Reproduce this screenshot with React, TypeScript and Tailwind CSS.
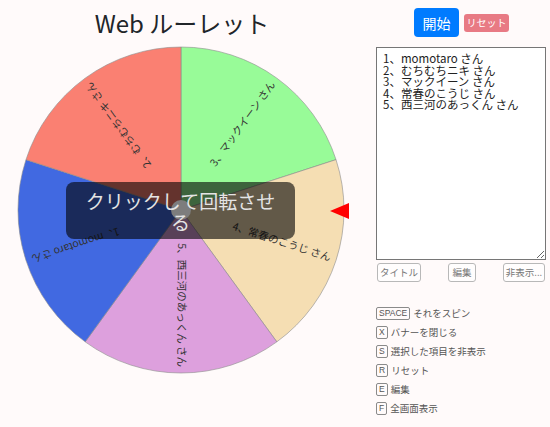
const slices = [
  { name: "3、マックイーン さん", color: "#98fb98", from: 0 },
  { name: "4、常春のこうじ さん", color: "#f5deb3", from: 72 },
  { name: "5、西三河のあっくん さん", color: "#dda0dd", from: 144 },
  { name: "1、momotaro さん", color: "#4169e1", from: 216 },
  { name: "2、むちむちニキ さん", color: "#fa8072", from: 288 },
];

const shortcuts = [
  { key: "SPACE", label: "それをスピン" },
  { key: "X", label: "バナーを閉じる" },
  { key: "S", label: "選択した項目を非表示" },
  { key: "R", label: "リセット" },
  { key: "E", label: "編集" },
  { key: "F", label: "全画面表示" },
];

const CX = 181;
const CY = 166;
const R = 163;

const pt = (deg: number, r: number) => {
  const a = (deg * Math.PI) / 180;
  return [CX + r * Math.sin(a), CY - r * Math.cos(a)];
};

const Wheel = () => (
  <svg width={364} height={334} className="block">
    {slices.map(s => {
      const [x1, y1] = pt(s.from, R);
      const [x2, y2] = pt(s.from + 72, R);
      return (
        <path
          key={s.name}
          d={`M${CX} ${CY} L${x1} ${y1} A${R} ${R} 0 0 1 ${x2} ${y2} Z`}
          fill={s.color}
          stroke="#8c8c8c"
          strokeWidth={0.6}
        />
      );
    })}
    {slices.map(s => (
      <text
        key={s.name + "-t"}
        transform={`translate(${CX} ${CY}) rotate(${s.from + 36 - 90})`}
        x={157}
        y={0}
        textAnchor="end"
        dominantBaseline="middle"
        fontSize={10.5}
        fill="#333"
        style={{ fontFamily: '"Noto Sans CJK JP", sans-serif' }}
      >
        {s.name}
      </text>
    ))}
    <polygon points="330,167 349,159 349,175" fill="#ff0000" />
  </svg>
);

export default function App() {
  return (
    <div
      className="flex w-[550px] h-[427px] bg-[#fffafa] text-[#212529] overflow-hidden"
      style={{ fontFamily: '"Noto Sans CJK JP", sans-serif' }}
    >
      <div className="w-[364px] shrink-0">
        <h1 className="h-[44px] flex items-center justify-center text-[24px] leading-none pt-[2px]">
          Web ルーレット
        </h1>
        <div className="relative">
          <Wheel />
          <div className="absolute left-[66px] top-[138px] w-[229px] h-[57px] rounded-[8px] bg-black/60" />
          <div className="absolute left-[171px] top-[156px] w-[20px] h-[20px] rounded-full bg-[#7d7d7d] z-[1]" />
          <div className="absolute left-[66px] top-[138px] w-[229px] h-[57px] px-[13px] flex items-center justify-center text-center text-[19px] leading-[21px] text-[#e4e4e4] z-[2] cursor-pointer">
            クリックして回転させる
          </div>
        </div>
      </div>

      <div className="ml-[12px] w-[170px] shrink-0">
        <div className="flex justify-center items-center gap-[5px] pt-[8px] pl-[1px]">
          <button className="w-[45px] h-[29px] rounded-[4px] bg-[#007bff] text-white text-[14px] leading-none">
            開始
          </button>
          <button className="w-[45px] h-[18px] rounded-[3px] bg-[#e87a84] text-white text-[10px] leading-none">
            リセット
          </button>
        </div>

        <textarea
          className="block mt-[10px] w-[170px] h-[213px] border border-[#767676] bg-white px-[6px] py-[5px] text-[11.5px] leading-[11.5px] text-[#222] overflow-y-scroll outline-none"
          defaultValue={"1、momotaro さん\n2、むちむちニキ さん\n3、マックイーン さん\n4、常春のこうじ さん\n5、西三河のあっくん さん"}
        />

        <div className="flex justify-between mt-[3px] px-[1px]">
          {["タイトル", "編集", "非表示..."].map(b => (
            <button
              key={b}
              className={`h-[19px] ${b === "編集" ? "w-[28px]" : b === "タイトル" ? "w-[44px]" : "w-[42px]"} rounded-[3px] border border-[#b8b8b8] bg-white/50 text-[9.5px] leading-none text-[#777]`}
            >
              {b}
            </button>
          ))}
        </div>

        <ul className="mt-[22px] flex flex-col">
          {shortcuts.map(s => (
            <li key={s.key} className="h-[19px] flex items-center gap-[3px]">
              <span
                className="h-[13px] px-[2px] flex items-center border border-[#8a8a8a] rounded-[2px] text-[8.5px] leading-none text-[#555]"
                style={{ fontFamily: '"Liberation Sans", sans-serif' }}
              >
                {s.key}
              </span>
              <span className="text-[9.5px] leading-none text-[#555]">{s.label}</span>
            </li>
          ))}
        </ul>
      </div>
    </div>
  );
}
